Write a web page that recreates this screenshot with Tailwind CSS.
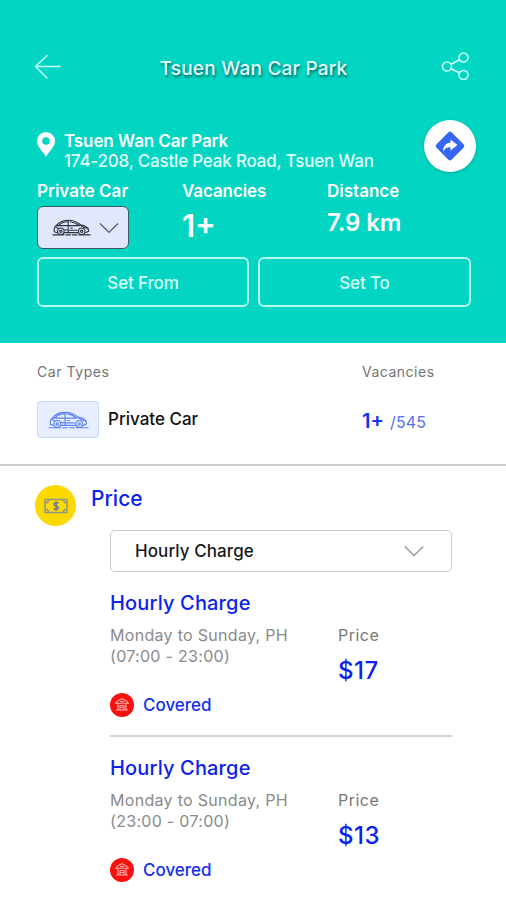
<!DOCTYPE html>
<html lang="en">
<head>
<meta charset="utf-8">
<title>Tsuen Wan Car Park</title>
<script src="https://cdn.jsdelivr.net/npm/@tailwindcss/browser@4"></script>
</head>
<body class="w-[506px] h-[900px] overflow-hidden bg-white font-['Inter','Liberation_Sans',sans-serif]">
<svg class="hidden">
  <symbol id="car" viewBox="0 0 42 18">
    <g fill="none" stroke="currentColor" stroke-width="1.2" stroke-linecap="round" stroke-linejoin="round">
      <path d="M5 14.500L2.500 13.500C2 10.500 3 8 5 6.500C8 2.500 12 1.200 18 1.200C24 1.200 27 3 30.500 6C35 6.500 39 8.500 39.500 13L36.500 14.500M13 14.500H28"/>
      <path d="M5 7H29.500M7.500 6.500C9.500 4 12 3 16.500 2.800M19.500 2.800C24 3 26 4.500 28.500 6.500M17.500 1.500V14M4 8.500L7 10M30.500 6.500L36 9.500H39M20 9.500H22M13.500 11.500L17 12M19 12H27"/>
      <circle cx="9.500" cy="13" r="3.500"/><circle cx="9.500" cy="13" r="1.200"/>
      <circle cx="32" cy="13" r="3.500"/><circle cx="32" cy="13" r="1.200"/>
      <path d="M1 16.900H13M15 16.900H20M22 16.900H27M29 16.900H41"/>
    </g>
  </symbol>
  <symbol id="house" viewBox="0 0 24 24">
    <circle cx="12" cy="12" r="12" fill="#fb1010"/>
    <g fill="none" stroke="#ffb0aa" stroke-width="1.100" stroke-linejoin="round">
      <path d="M5.500 10.300L7.500 8L12 5.800L16.500 8L18.500 10.300ZM8 10.500V16.500M16 10.500V16.500M6 17H18M10 16.500V12.500H14V16.500M10 14.500H14M10 8.500H14"/>
    </g>
  </symbol>
</svg>

<header class="h-[343px] bg-[#02d5c2] text-white px-[37px] flex flex-col">
  <div class="h-[131px] pt-[46px] flex items-start justify-between">
    <svg class="w-[28px] h-[26px] mt-[8px] -ml-[3px]" viewBox="0 0 28 26" fill="none" stroke="#c9fff5" stroke-width="1.500" stroke-linecap="round" stroke-linejoin="round"><path d="M13 1.500L1.500 12.500L13 24M1.500 12.500H26"/></svg>
    <h1 class="ml-[4px] text-[19px] tracking-[0.22px] leading-[46px] font-medium whitespace-nowrap text-[#e6fffa] [text-shadow:1px_2px_3px_rgba(0,60,60,.75)]">Tsuen Wan Car Park</h1>
    <svg class="w-[28px] h-[28px] mt-[6px]" viewBox="0 0 28 28" fill="none" stroke="#c9fff5" stroke-width="1.700"><circle cx="6" cy="14.500" r="4.500"/><circle cx="22.500" cy="5.500" r="4.500"/><circle cx="22.500" cy="23" r="4.500"/><path d="M10 12.300L18.500 7.700M10 16.700L18.500 20.800"/></svg>
  </div>
  <div class="h-[51px] flex">
    <svg class="w-[18px] h-[25px] mt-[1px] shrink-0" viewBox="0 0 18 25"><path fill="#fff" fill-rule="evenodd" d="M9 0A9 9 0 0 0 0 9C0 15 6 19 9 25C12 19 18 15 18 9A9 9 0 0 0 9 0ZM9 5.200A3.800 3.800 0 1 1 9 12.800A3.800 3.800 0 1 1 9 5.200Z"/></svg>
    <div class="ml-[9px] flex-1 whitespace-nowrap">
      <div class="text-[17px] tracking-[-0.1px] leading-[20px] font-semibold">Tsuen Wan Car Park</div>
      <div class="text-[17px] tracking-[-0.2px] leading-[20px] font-medium text-[#e0fffa]">174-208, Castle Peak Road, Tsuen Wan</div>
    </div>
    <div class="size-[52px] -mt-[11px] -mr-[7px] rounded-full bg-white shadow-[0_1px_3px_rgba(0,80,80,.35)] flex items-center justify-center shrink-0">
      <svg class="size-[32px]" viewBox="0 0 32 32"><rect x="5.200" y="5.200" width="21.600" height="21.600" rx="2.500" transform="rotate(45 16 16)" fill="#3567f4"/><path d="M16.500 9.500L23.500 15L16.500 20.500V17.300C13 17 10.800 18.500 9 21.500C9 16.500 11.500 13 16.500 12.700Z" fill="#fff"/></svg>
    </div>
  </div>
  <div class="h-[75px] flex">
    <div class="w-[145px]">
      <div class="text-[17px] leading-[18px] font-semibold whitespace-nowrap">Private Car</div>
      <div class="mt-[6px] w-[92px] h-[43px] rounded-[6px] border border-[#345d68] bg-[#e1e8fc] flex items-center pl-[14px]">
        <svg class="w-[39px] h-[17px] text-[#30323c]"><use href="#car"/></svg>
        <svg class="ml-[8px] w-[20px] h-[12px]" viewBox="0 0 20 12" fill="none" stroke="#525665" stroke-width="1.200"><path d="M1 1.500L10 10.500L19 1.500"/></svg>
      </div>
    </div>
    <div class="w-[145px]">
      <div class="text-[17px] tracking-[-0.1px] leading-[18px] font-semibold">Vacancies</div>
      <div class="mt-[8px] text-[31px] leading-[36px] font-semibold">1+</div>
    </div>
    <div class="whitespace-nowrap">
      <div class="text-[17px] leading-[18px] font-semibold">Distance</div>
      <div class="mt-[8px] text-[24px] tracking-[-0.1px] leading-[29px] font-semibold">7.9 km</div>
    </div>
  </div>
  <div class="flex gap-[9px] w-[434px]">
    <div class="w-[212px] h-[50px] rounded-[6px] border-2 border-[#b5f8ed] flex items-center justify-center pt-[3px] text-[17px] tracking-[-0.15px] font-medium text-[#d5fff8]">Set From</div>
    <div class="w-[213px] h-[50px] rounded-[6px] border-2 border-[#b5f8ed] flex items-center justify-center pt-[3px] text-[17px] tracking-[-0.15px] font-medium text-[#d5fff8]">Set To</div>
  </div>
</header>

<section class="h-[123px] border-b-2 border-[#cfcfcf] pl-[37px] pt-[19px]">
  <div class="flex text-[14px] leading-[20px] text-[#747474]">
    <div class="w-[325px]"><span class="tracking-[0.55px]">Car Types</span></div>
    <div class="tracking-[0.5px]">Vacancies</div>
  </div>
  <div class="mt-[19px] h-[37px] flex items-center">
    <div class="w-[62px] h-[37px] rounded-[3px] border border-[#cbd9fb] bg-[#e6eeff] flex items-center justify-center"><svg class="w-[41px] h-[18px] text-[#5b82f5]"><use href="#car"/></svg></div>
    <div class="ml-[9px] w-[254px] pt-[1px] text-[17px] font-medium text-[#111]">Private Car</div>
    <div class="flex items-baseline pt-[3px] text-[#1230f0]"><span class="text-[20px] font-semibold">1+</span><span class="ml-[6px] text-[16px] tracking-[0.2px] text-[#5370ee]">/545</span></div>
  </div>
</section>

<main class="flex pl-[35px] pt-[19px]">
  <div class="size-[41px] rounded-full bg-[#fcd900] flex items-center justify-center shrink-0">
    <svg class="w-[24px] h-[16px]" viewBox="0 0 24 16" fill="none" stroke="#8f9683" stroke-width="1.500"><rect x="1" y="1.500" width="22" height="13"/><path d="M1 5Q4.500 5 4.500 1.500M19.500 1.500Q19.500 5 23 5M1 11Q4.500 11 4.500 14.500M19.500 14.500Q19.500 11 23 11"/><path stroke="#707e91" d="M14.500 5.500C13 4 9.800 4.500 10 6.300C10.200 8.500 14.300 7.500 14.300 9.700C14.300 11.800 10.800 12 9.500 10.500M12.100 3.300V12.800"/></svg>
  </div>
  <div class="ml-[15px] w-[361px]">
    <h2 class="pt-[1px] text-[21px] leading-[26px] font-medium text-[#0c22ee]">Price</h2>
    <div class="pl-[19px]">
      <div class="mt-[18px] w-[342px] h-[42px] rounded-[5px] border border-[#c9c9c9] flex items-center justify-between pl-[24px] pr-[27px]">
        <span class="pt-[1px] text-[17px] tracking-[0.08px] font-medium text-[#181818]">Hourly Charge</span>
        <svg class="w-[20px] h-[12px]" viewBox="0 0 20 12" fill="none" stroke="#999" stroke-width="1.400"><path d="M.8 1.500L10 10.500L19.200 1.500"/></svg>
      </div>
      <article class="h-[165px] border-b-2 border-[#d2d2d2] pt-[18px] w-[342px]">
        <h3 class="text-[20px] tracking-[0.15px] leading-[26px] font-medium text-[#0c22ee]">Hourly Charge</h3>
        <div class="h-[75px] pt-[9px] flex text-[16px] text-[#8a8a8a]">
          <div class="w-[228px] leading-[21px] tracking-[0.3px] whitespace-nowrap">Monday to Sunday, PH<br>(07:00 - 23:00)</div>
          <div><div class="leading-[21px] tracking-[0.5px] text-[#777]">Price</div><div class="mt-[12px] text-[24px] tracking-[0.5px] leading-[26px] font-medium text-[#0c22ee]">$17</div></div>
        </div>
        <div class="mt-[2px] flex items-center h-[24px]"><svg class="size-[24px]"><use href="#house"/></svg><span class="ml-[9px] pt-[1px] text-[17px] font-medium text-[#1230f0]">Covered</span></div>
      </article>
      <article class="h-[165px] pt-[18px] w-[342px]">
        <h3 class="text-[20px] tracking-[0.15px] leading-[26px] font-medium text-[#0c22ee]">Hourly Charge</h3>
        <div class="h-[75px] pt-[9px] flex text-[16px] text-[#8a8a8a]">
          <div class="w-[228px] leading-[21px] tracking-[0.3px] whitespace-nowrap">Monday to Sunday, PH<br>(23:00 - 07:00)</div>
          <div><div class="leading-[21px] tracking-[0.5px] text-[#777]">Price</div><div class="mt-[12px] text-[24px] tracking-[0.5px] leading-[26px] font-medium text-[#0c22ee]">$13</div></div>
        </div>
        <div class="mt-[2px] flex items-center h-[24px]"><svg class="size-[24px]"><use href="#house"/></svg><span class="ml-[9px] pt-[1px] text-[17px] font-medium text-[#1230f0]">Covered</span></div>
      </article>
    </div>
  </div>
</main>
</body>
</html>
